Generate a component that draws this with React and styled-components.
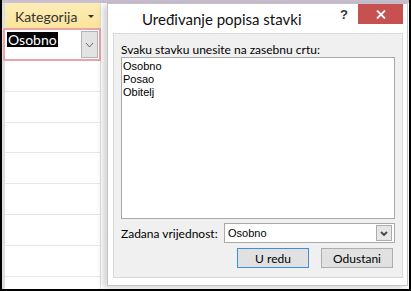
import React from "react";
import styled, { createGlobalStyle } from "styled-components";

const Global = createGlobalStyle`
  html, body { margin: 0; padding: 0; background: #fff; overflow: hidden; }
  * { box-sizing: border-box; }
`;

const ui = `"Lato", "Open Sans", sans-serif`;
const classic = `"Liberation Sans", Arial, sans-serif`;

const Frame = styled.div`
  width: 411px;
  height: 291px;
  border: 2px solid #000;
  border-top: 0;
  display: flex;
  flex-direction: column;
  background: #fff;
  overflow: hidden;
`;

const TopStrip = styled.div`
  height: 3px;
  margin: 0 -2px;
  background: #cbc0d2;
  flex: none;
`;

const Workspace = styled.div`
  position: relative;
  flex: 1;
  display: flex;
`;

const RowSelector = styled.div`
  width: 2px;
  background: #dedede;
`;

const Column = styled.div`
  width: 97px;
  display: flex;
  flex-direction: column;
  border-left: 1px solid #d6dde6;
  border-right: 1px solid #e4e4e4;
`;

const Header = styled.div`
  height: 25px;
  background: linear-gradient(#fdedb6, #fbe49b);
  display: flex;
  align-items: center;
  padding: 2px 6px 0 10px;
  font: 14px ${ui};
  color: #333;
  justify-content: space-between;
`;

const SortArrow = styled.span`
  width: 0;
  height: 0;
  border-left: 3.5px solid transparent;
  border-right: 3.5px solid transparent;
  border-top: 3.5px solid #333;
`;

const ActiveRow = styled.div`
  height: 33px;
  margin: 0 -1px 0 -2px;
  border: 2px solid #eba3aa;
  display: flex;
  align-items: flex-start;
  justify-content: space-between;
  padding: 1px 1px 1px 2px;
  flex: none;
`;

const Highlighted = styled.span`
  margin-top: 1px;
  background: #000;
  color: #fff;
  font: 14px/15px ${ui};
  padding: 0 1px 0 1px;
`;

const ComboButton = styled.div`
  width: 17px;
  height: 27px;
  background: #e3e3e3;
  border: 1px solid #b4b4b4;
  display: flex;
  align-items: center;
  justify-content: center;
`;

const GridRow = styled.div`
  height: 30.8px;
  border-bottom: 1px solid #e7e7e7;
  flex: none;
`;

const Window = styled.div`
  position: absolute;
  left: 105px;
  top: 0;
  width: 301px;
  height: 283px;
  background: #fff;
  border: 1px solid #c4c4c4;
  box-shadow: -4px 2px 7px rgba(0, 0, 0, 0.18);
  display: flex;
  flex-direction: column;
  padding: 0 4px 7px 5px;
`;

const TitleBar = styled.div`
  height: 29px;
  display: flex;
  align-items: flex-start;
  flex: none;
`;

const Title = styled.div`
  flex: 1;
  padding: 6px 0 0 29px;
  font: 15px ${ui};
  color: #111;
`;

const Help = styled.div`
  font: bold 13px ${classic};
  color: #333;
  margin: 3px 10px 0 0;
`;

const Close = styled.div`
  width: 45px;
  height: 20px;
  background: #c75050;
  display: flex;
  align-items: center;
  justify-content: center;
`;

const Panel = styled.div`
  flex: 1;
  background: #f0f0f0;
  border: 1px solid #d9d9d9;
  padding: 8px 6px 0 7px;
  display: flex;
  flex-direction: column;
`;

const Label = styled.div`
  font: 12px/15px ${ui};
  color: #000;
`;

const ListBox = styled.textarea`
  width: 274px;
  height: 162px;
  flex: none;
  resize: none;
  border: 1px solid #a9a9a9;
  background: #fff;
  font: 11px/13px ${classic};
  color: #000;
  padding: 2px 1px;
  margin: 0;
  outline: none;
  overflow: hidden;
`;

const FieldRow = styled.div`
  display: flex;
  align-items: center;
  justify-content: space-between;
  margin-top: 4px;
  width: 274px;
`;

const Select = styled.div`
  width: 171px;
  height: 20px;
  border: 1px solid #a9a9a9;
  background: #fff;
  display: flex;
  align-items: center;
  justify-content: space-between;
  padding: 0 2px 0 3px;
  font: 11px ${classic};
  color: #000;
`;

const SelectButton = styled.div`
  width: 16px;
  height: 16px;
  background: #e6e6e6;
  border: 1px solid #adadad;
  display: flex;
  align-items: center;
  justify-content: center;
`;

const ButtonRow = styled.div`
  display: flex;
  justify-content: flex-end;
  gap: 12px;
  margin-top: 5px;
  width: 272px;
`;

const Button = styled.div`
  width: 72px;
  height: 20px;
  background: #e1e1e1;
  border: 1px solid ${(p) => (p.$primary ? "#3c8fdc" : "#adadad")};
  display: flex;
  align-items: center;
  justify-content: center;
  font: 12px ${ui};
  color: #000;
`;

const Chevron = ({ color = "#777", w = 7, h = 4, sw = 1 }) => (
  <svg width={w + 2} height={h + 2} viewBox={`0 0 ${w + 2} ${h + 2}`}>
    <polyline
      points={`1,1 ${w / 2 + 1},${h + 1} ${w + 1},1`}
      fill="none"
      stroke={color}
      strokeWidth={sw}
    />
  </svg>
);

const CloseX = () => (
  <svg width="10" height="9" viewBox="0 0 10 9">
    <path d="M1 0.5 L9 8.5 M9 0.5 L1 8.5" stroke="#fff" strokeWidth="1.8" />
  </svg>
);

export default function App() {
  return (
    <>
      <Global />
      <Frame>
        <TopStrip />
        <Workspace>
          <RowSelector />
          <Column>
            <Header>
              Kategorija
              <SortArrow />
            </Header>
            <ActiveRow>
              <Highlighted>Osobno</Highlighted>
              <ComboButton>
                <Chevron color="#666" w={7} h={4} />
              </ComboButton>
            </ActiveRow>
            {Array.from({ length: 8 }).map((_, i) => (
              <GridRow key={i} />
            ))}
          </Column>
          <Window>
            <TitleBar>
              <Title>Uređivanje popisa stavki</Title>
              <Help>?</Help>
              <Close>
                <CloseX />
              </Close>
            </TitleBar>
            <Panel>
              <Label>Svaku stavku unesite na zasebnu crtu:</Label>
              <ListBox readOnly defaultValue={"Osobno\nPosao\nObitelj"} />
              <FieldRow>
                <Label>Zadana vrijednost:</Label>
                <Select>
                  Osobno
                  <SelectButton>
                    <Chevron color="#444" w={6} h={3} sw={1.8} />
                  </SelectButton>
                </Select>
              </FieldRow>
              <ButtonRow>
                <Button $primary>U redu</Button>
                <Button>Odustani</Button>
              </ButtonRow>
            </Panel>
          </Window>
        </Workspace>
      </Frame>
    </>
  );
}
